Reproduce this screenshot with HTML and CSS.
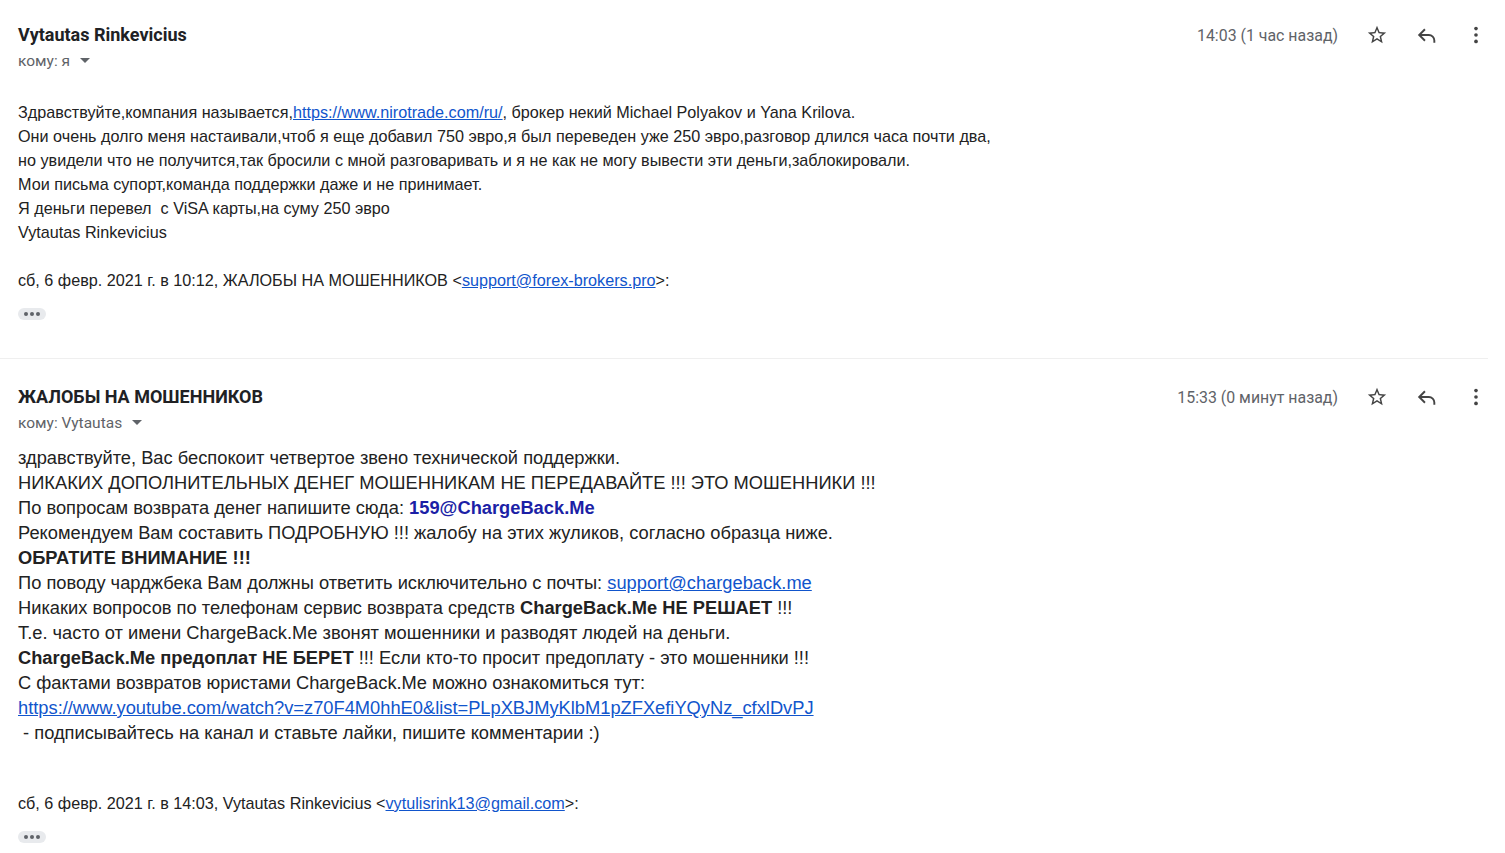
FILE: index.html
```html
<!DOCTYPE html>
<html lang="ru">
<head>
<meta charset="utf-8">
<title>Mail</title>
<link rel="stylesheet" href="styles.css">
</head>
<body>
<div class="thread">
  <section class="msg msg-first">
    <header class="msg-head">
      <div class="who">
        <div class="sender">Vytautas Rinkevicius</div>
        <div class="to">кому: я <span class="caret"></span></div>
      </div>
      <div class="meta">
        <span class="time">14:03 (1 час назад)</span>
        <span class="icon star"><svg viewBox="0 0 24 24" width="22" height="22"><path d="M22 9.24l-7.19-.62L12 2 9.19 8.63 2 9.24l5.46 4.73L5.82 21 12 17.27 18.18 21l-1.63-7.03L22 9.24zM12 15.4l-3.76 2.27 1-4.28-3.32-2.88 4.38-.38L12 6.1l1.71 4.04 4.38.38-3.32 2.88 1 4.28L12 15.4z" fill="#444"/></svg></span>
        <span class="icon reply"><svg viewBox="0 0 24 24" width="22" height="22"><path d="M9 6.5L3.5 12 9 17.5M4 12h10a6 6 0 0 1 6 6v1.5" fill="none" stroke="#444" stroke-width="2.1" stroke-linecap="square" stroke-linejoin="miter"/></svg></span>
        <span class="icon more"><svg viewBox="0 0 24 24" width="22" height="22"><circle cx="12" cy="5" r="2" fill="#444"/><circle cx="12" cy="12" r="2" fill="#444"/><circle cx="12" cy="19" r="2" fill="#444"/></svg></span>
      </div>
    </header>
    <div class="body body-small">
      <p>Здравствуйте,компания называется,<a href="#">https://www.nirotrade.com/ru/</a>, брокер некий Michael Polyakov и Yana Krilova.</p>
      <p>Они очень долго меня настаивали,чтоб я еще добавил 750 эвро,я был переведен уже 250 эвро,разговор длился часа почти два,</p>
      <p>но увидели что не получится,так бросили с мной разговаривать и я не как не могу вывести эти деньги,заблокировали.</p>
      <p>Мои письма супорт,команда поддержки даже и не принимает.</p>
      <p>Я деньги перевел&nbsp; с ViSA карты,на суму 250 эвро</p>
      <p>Vytautas Rinkevicius</p>
      <p class="quote-line">сб, 6 февр. 2021 г. в 10:12, ЖАЛОБЫ НА МОШЕННИКОВ &lt;<a href="#">support@forex-brokers.pro</a>&gt;:</p>
      <span class="dots"><i></i><i></i><i></i></span>
    </div>
  </section>
  <hr class="sep">
  <section class="msg msg-second">
    <header class="msg-head">
      <div class="who">
        <div class="sender">ЖАЛОБЫ НА МОШЕННИКОВ</div>
        <div class="to">кому: Vytautas <span class="caret"></span></div>
      </div>
      <div class="meta">
        <span class="time">15:33 (0 минут назад)</span>
        <span class="icon star"><svg viewBox="0 0 24 24" width="22" height="22"><path d="M22 9.24l-7.19-.62L12 2 9.19 8.63 2 9.24l5.46 4.73L5.82 21 12 17.27 18.18 21l-1.63-7.03L22 9.24zM12 15.4l-3.76 2.27 1-4.28-3.32-2.88 4.38-.38L12 6.1l1.71 4.04 4.38.38-3.32 2.88 1 4.28L12 15.4z" fill="#444"/></svg></span>
        <span class="icon reply"><svg viewBox="0 0 24 24" width="22" height="22"><path d="M9 6.5L3.5 12 9 17.5M4 12h10a6 6 0 0 1 6 6v1.5" fill="none" stroke="#444" stroke-width="2.1" stroke-linecap="square" stroke-linejoin="miter"/></svg></span>
        <span class="icon more"><svg viewBox="0 0 24 24" width="22" height="22"><circle cx="12" cy="5" r="2" fill="#444"/><circle cx="12" cy="12" r="2" fill="#444"/><circle cx="12" cy="19" r="2" fill="#444"/></svg></span>
      </div>
    </header>
    <div class="body body-large">
      <p>здравствуйте, Вас беспокоит четвертое звено технической поддержки.</p>
      <p>НИКАКИХ ДОПОЛНИТЕЛЬНЫХ ДЕНЕГ МОШЕННИКАМ НЕ ПЕРЕДАВАЙТЕ !!! ЭТО МОШЕННИКИ !!!</p>
      <p>По вопросам возврата денег напишите сюда: <b class="navy">159@ChargeBack.Me</b></p>
      <p>Рекомендуем Вам составить ПОДРОБНУЮ !!! жалобу на этих жуликов, согласно образца ниже.</p>
      <p><b>ОБРАТИТЕ ВНИМАНИЕ !!!</b></p>
      <p>По поводу чарджбека Вам должны ответить исключительно с почты: <a href="#">support@chargeback.me</a></p>
      <p>Никаких вопросов по телефонам сервис возврата средств <b>ChargeBack.Me НЕ РЕШАЕТ</b> !!!</p>
      <p>Т.е. часто от имени ChargeBack.Me звонят мошенники и разводят людей на деньги.</p>
      <p><b>ChargeBack.Me предоплат НЕ БЕРЕТ</b> !!! Если кто-то просит предоплату - это мошенники !!!</p>
      <p>С фактами возвратов юристами ChargeBack.Me можно ознакомиться тут:</p>
      <p><a href="#">https://www.youtube.com/watch?v=z70F4M0hhE0&amp;list=PLpXBJMyKlbM1pZFXefiYQyNz_cfxlDvPJ</a></p>
      <p>&nbsp;- подписывайтесь на канал и ставьте лайки, пишите комментарии :)</p>
    </div>
    <div class="body body-small tail">
      <p class="quote-line">сб, 6 февр. 2021 г. в 14:03, Vytautas Rinkevicius &lt;<a href="#">vytulisrink13@gmail.com</a>&gt;:</p>
      <span class="dots"><i></i><i></i><i></i></span>
    </div>
  </section>
</div>
</body>
</html>
```

FILE: styles.css
```css
html, body {
  margin: 0;
  padding: 0;
  background: #ffffff;
}

.thread {
  width: 1488px;
}

.msg {
  padding: 0 18px;
}

.msg-first {
  padding-top: 23px;
  padding-bottom: 38px;
}

.msg-second {
  padding-top: 26px;
}

.msg-head {
  display: flex;
  justify-content: space-between;
  align-items: flex-start;
}

.who {
  display: flex;
  flex-direction: column;
}

.sender {
  font-family: Roboto, "Liberation Sans", sans-serif;
  font-weight: 700;
  font-size: 18px;
  line-height: 24px;
  color: #202124;
}

.to {
  font-family: Roboto, "Liberation Sans", sans-serif;
  font-size: 15.5px;
  line-height: 20px;
  color: #5f6368;
  margin-top: 4px;
}

.caret {
  display: inline-block;
  width: 0;
  height: 0;
  border-left: 5px solid transparent;
  border-right: 5px solid transparent;
  border-top: 5px solid #5f6368;
  margin-left: 6px;
  vertical-align: middle;
  position: relative;
  top: -1px;
}

.meta {
  display: flex;
  align-items: center;
  height: 24px;
  margin-right: -30px;
}

.time {
  font-family: Roboto, "Liberation Sans", sans-serif;
  font-size: 15.9px;
  color: #5f6368;
  margin-right: 14px;
}

.icon {
  display: flex;
  width: 50px;
  height: 24px;
  align-items: center;
  justify-content: center;
}

.icon.more {
  width: 48px;
}

.body {
  font-family: "Liberation Sans", Arial, sans-serif;
  color: #222222;
}

.body p {
  margin: 0;
}

.body a {
  color: #1155cc;
  text-decoration: underline;
}

.body-small {
  font-size: 16.2px;
  line-height: 24px;
}

.msg-first .body {
  margin-top: 29px;
}

.body-small .quote-line {
  margin-top: 24px;
}

.body-large {
  font-size: 18.3px;
  line-height: 25px;
  margin-top: 12px;
}

.navy {
  color: #1c1fa6;
}

.tail {
  margin-top: 46px;
}

.tail .quote-line {
  margin-top: 0;
}

.dots {
  display: inline-flex;
  gap: 2px;
  align-items: center;
  justify-content: center;
  width: 28px;
  height: 12px;
  border-radius: 6px;
  background: #e8eaed;
  margin-top: 16px;
  vertical-align: top;
}

.dots i {
  display: block;
  width: 4px;
  height: 4px;
  border-radius: 50%;
  background: #5f6368;
}

.sep {
  margin: 0;
  border: 0;
  height: 1px;
  background: #efefef;
}
```
